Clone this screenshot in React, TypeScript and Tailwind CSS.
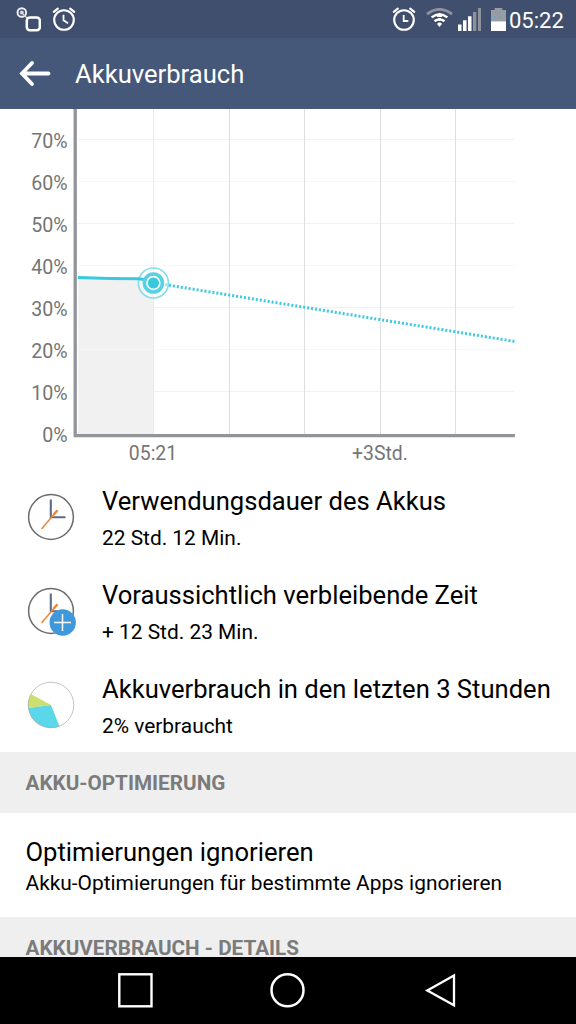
import type { ReactNode } from "react";

const percentLabels = [
  { label: "70%", y: 38.5 },
  { label: "60%", y: 80.5 },
  { label: "50%", y: 122.5 },
  { label: "40%", y: 164.5 },
  { label: "30%", y: 206.5 },
  { label: "20%", y: 248.5 },
  { label: "10%", y: 290.5 },
  { label: "0%", y: 333 },
];

const horizontalLines = [
  { y: 30.5, color: "#f1f1f1" },
  { y: 72.5, color: "#f7f7f7" },
  { y: 114.5, color: "#f1f1f1" },
  { y: 156.5, color: "#f6f6f6" },
  { y: 198.5, color: "#f1f1f1" },
  { y: 240.5, color: "#f7f7f7" },
  { y: 282.5, color: "#f1f1f1" },
];

const verticalLines = [
  { x: 153.5, color: "#eaeaea" },
  { x: 229.5, color: "#dedede" },
  { x: 304.5, color: "#dedede" },
  { x: 380.5, color: "#dedede" },
  { x: 455.5, color: "#dedede" },
];

function AlarmIcon({ right = false }: { right?: boolean }) {
  return (
    <svg width="24" height="24" viewBox="0 0 24 24" fill="none" stroke="#fff" strokeLinecap="round">
      <circle cx="12" cy="13" r="9.8" strokeWidth="2.1" />
      <path d="M1.8 4.8 5.8 1.7M22.2 4.8 18.2 1.7" strokeWidth="2.2" />
      <path d={right ? "M11.7 8V14H16.3" : "M11.5 7.8V13.3L16 16.3"} strokeWidth="1.8" strokeLinecap="butt" />
    </svg>
  );
}

function KnockIcon() {
  return (
    <svg width="25" height="25" viewBox="0 0 25 25" fill="none">
      <circle cx="5.8" cy="5.5" r="4.3" stroke="#f2f3f5" strokeWidth="1.9" />
      <circle cx="5.8" cy="5.5" r="2" fill="#d3d7de" />
      <path d="M6 6 11 11" stroke="#d0d4dc" strokeWidth="1.3" />
      <rect x="10.8" y="10.6" width="13" height="12.6" rx="3" stroke="#fff" strokeWidth="2.5" />
    </svg>
  );
}

function WifiIcon() {
  return (
    <svg width="27" height="20" viewBox="0 0 27 20" fill="none">
      <path d="M1 6.2Q13.5-3.4 26 6.2" stroke="#8f949e" strokeWidth="2.8" />
      <path d="M5.6 9.4Q13.5 3 21.4 9.4" stroke="#fff" strokeWidth="2.4" />
      <path d="M8.6 13.2Q13.5 9.2 18.4 13.2" stroke="#fff" strokeWidth="2.4" />
      <path d="M10.6 15.6Q13.5 13.2 16.4 15.6L13.5 19Z" fill="#fff" />
      <path d="M13.5 5 16.5 9H10.5ZM13.5 13.3 11.2 10.5H15.8Z" fill="#fff" />
      <path d="M9.8 9.9H11.8M15.2 9.9H17.2M10 14.8H11.5M15.5 14.8H17" stroke="#333942" strokeWidth="1.4" />
    </svg>
  );
}

function SignalIcon() {
  return (
    <svg width="24" height="24" viewBox="0 0 24 24">
      <path d="M0 16.5h3.5V23H0ZM5 12.3h3.5V23H5ZM10 8.3h3.5V23H10Z" fill="#fff" />
      <path d="M15 4h3.3v19H15ZM20 0h3v23h-3Z" fill="#8d929c" />
    </svg>
  );
}

function BatteryIcon() {
  return (
    <svg width="15" height="23" viewBox="0 0 15 23">
      <path d="M0 2h3.7V0h7.6v2H15v11.5H0Z" fill="#999ca0" />
      <path d="M0 13.3h15V23H0Z" fill="#fff" />
      <path d="M4 4.5h1M9 4.5h1M6 6.5h1M3 8.5h1M8.5 8.5h1M6 10.5h1M10 10.5h1" stroke="#4a9fd8" />
    </svg>
  );
}

function StatusBar() {
  return (
    <div className="flex h-[38px] shrink-0 items-start bg-[#414f6e] pr-[11px] pl-4 text-white">
      <div className="flex gap-[11px] pt-[7px]">
        <KnockIcon />
        <AlarmIcon />
      </div>
      <div className="ml-auto flex items-start pt-[7px]">
        <AlarmIcon right />
        <div className="ml-[10px] pt-px">
          <WifiIcon />
        </div>
        <div className="ml-[5px] pt-px">
          <SignalIcon />
        </div>
        <div className="ml-[9px] pt-px">
          <BatteryIcon />
        </div>
        <span className="ml-[3px] w-[56px] pt-px text-[22px] leading-[26px] whitespace-nowrap">05:22</span>
      </div>
    </div>
  );
}

function BatteryChart() {
  return (
    <svg className="block shrink-0" width="576" height="361" viewBox="0 0 576 361" fill="none">
      {/* elapsed time area */}
      <path d="M78 169 140 170 153 174V325H78Z" fill="#f1f1f1" />

      {horizontalLines.map((line) => (
        <path key={line.y} d={`M78 ${line.y}H515`} stroke={line.color} />
      ))}
      {verticalLines.map((line) => (
        <path key={line.x} d={`M${line.x} 0V325`} stroke={line.color} />
      ))}

      {/* axes */}
      <path d="M75.2 0V326.6H515" stroke="#919498" strokeWidth="3.3" />

      {percentLabels.map((item) => (
        <text key={item.label} x="67.5" y={item.y} textAnchor="end" fontSize="19.6" fill="#757575">
          {item.label}
        </text>
      ))}
      <text x="153" y="351" textAnchor="middle" fontSize="19.4" fill="#757575">05:21</text>
      <text x="380" y="351" textAnchor="middle" fontSize="19.4" fill="#757575">+3Std.</text>

      {/* usage so far and forecast */}
      <path d="M165 175.6 515 232.5" stroke="#3acbe0" strokeWidth="3" strokeDasharray="2 2" />
      <circle cx="153.4" cy="174" r="15" stroke="#86deea" strokeWidth="1.7" fill="#fff" fillOpacity="0.5" />
      <path d="M78 168.5 110 169.4 139 169.7 147 171" stroke="#38c9e0" strokeWidth="3" />
      <circle cx="153.4" cy="174" r="9" stroke="#56d2e4" strokeWidth="3.6" fill="#fff" />
      <circle cx="153.4" cy="174" r="5.6" fill="#38c9e0" />
    </svg>
  );
}

function ClockIcon({ plus = false }: { plus?: boolean }) {
  return (
    <svg width="50" height="50" viewBox="0 0 50 50" fill="none">
      <circle cx="24" cy="24" r="22.4" stroke="#6b6b6b" strokeWidth="1.5" />
      <path d="M23.8 6.5V24.3H38.5" stroke="#5f6c86" strokeWidth="2.1" />
      <path d="M14.5 36 30 17.8" stroke="#ed8636" strokeWidth="1.5" />
      <path d="M26.5 21.8 30.5 17.3" stroke="#ed8636" strokeWidth="2.3" />
      {plus && (
        <>
          <circle cx="35.7" cy="35.5" r="13.2" fill="#3f98d9" />
          <path d="M35.5 27V44M27.2 35.5H44" stroke="#fff" strokeWidth="1.5" />
        </>
      )}
    </svg>
  );
}

function PieIcon() {
  return (
    <svg width="50" height="50" viewBox="0 0 50 50" fill="none">
      <path d="M24 24 3.9 13A23 23 0 0 0 1.2 27Z" fill="#cddf70" />
      <path d="M24 24 1.2 27A23 23 0 0 0 32.5 45.4Z" fill="#5ad7e8" />
      <circle cx="24" cy="24" r="22.8" stroke="#aaa" strokeWidth="0.7" />
    </svg>
  );
}

function InfoRow({ icon, title, value }: { icon: ReactNode; title: string; value: string }) {
  return (
    <div className="flex h-[94px] shrink-0 items-start pl-[27px] text-black">
      <div className="w-[75px] shrink-0 pt-[23px]">{icon}</div>
      <div className="pt-4 whitespace-nowrap">
        <div className="text-[25.6px] leading-[30px]">{title}</div>
        <div className="mt-[10px] text-[20.9px] leading-6">{value}</div>
      </div>
    </div>
  );
}

function SectionHeader({ title }: { title: string }) {
  return (
    <div className="h-[61px] shrink-0 bg-[#efefef] pl-[25.5px] text-[20.7px] leading-[62px] font-bold text-[#7b7b7b]">
      {title}
    </div>
  );
}

function NavigationBar() {
  return (
    <nav className="flex h-[67px] shrink-0 items-center justify-between bg-black pr-[119px] pl-[117px]">
      <svg width="36" height="36" viewBox="0 0 36 36" fill="none" stroke="#fff" strokeWidth="2.4">
        <rect x="2.3" y="1.3" width="32.2" height="32" />
      </svg>
      <svg width="36" height="36" viewBox="0 0 36 36" fill="none" stroke="#fff" strokeWidth="2.5">
        <circle cx="17.5" cy="17.3" r="16" />
      </svg>
      <svg width="34" height="36" viewBox="0 0 34 36" fill="none" stroke="#fff" strokeWidth="2.3">
        <path d="M31 2.5V32.2L4.3 17.4Z" />
      </svg>
    </nav>
  );
}

export default function App() {
  return (
    <div className="flex h-[1024px] w-[576px] flex-col overflow-hidden bg-white font-['Roboto',sans-serif]">
      <StatusBar />
      <header className="flex h-[71px] shrink-0 items-center bg-[#465879] pl-[19px] text-white">
        <svg width="34" height="28" viewBox="0 0 34 28" fill="none" stroke="#fff" strokeWidth="3.8" strokeLinecap="round">
          <path d="M3 13.5H29.5M13 3 3 13.5 13 24" />
        </svg>
        <h1 className="ml-[22px] text-[25.6px] leading-[30px]">Akkuverbrauch</h1>
      </header>

      <main className="flex min-h-0 flex-1 flex-col overflow-hidden">
        <BatteryChart />
        <InfoRow icon={<ClockIcon />} title="Verwendungsdauer des Akkus" value="22 Std. 12 Min." />
        <InfoRow icon={<ClockIcon plus />} title="Voraussichtlich verbleibende Zeit" value="+ 12 Std. 23 Min." />
        <InfoRow icon={<PieIcon />} title="Akkuverbrauch in den letzten 3 Stunden" value="2% verbraucht" />

        <SectionHeader title="AKKU-OPTIMIERUNG" />
        <div className="h-[104px] shrink-0 pt-6 pl-[25.5px] whitespace-nowrap text-black">
          <div className="text-[25.6px] leading-[30px]">Optimierungen ignorieren</div>
          <div className="mt-1 text-[20.9px] leading-6">Akku-Optimierungen für bestimmte Apps ignorieren</div>
        </div>
        <SectionHeader title="AKKUVERBRAUCH - DETAILS" />
      </main>

      <NavigationBar />
    </div>
  );
}
